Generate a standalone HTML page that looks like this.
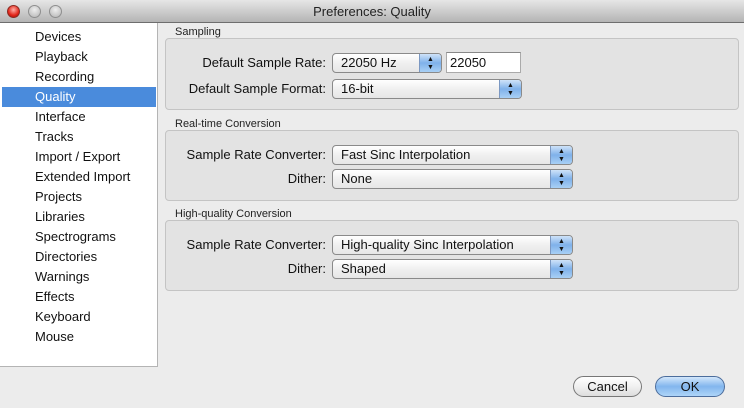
<!DOCTYPE html>
<html><head><meta charset="utf-8"><style>
*{margin:0;padding:0;box-sizing:border-box}
body{width:744px;height:408px;background:#ececec;font-family:"Liberation Sans",sans-serif;font-size:13px;color:#111;position:relative;overflow:hidden}
.title{position:absolute;left:0;top:0;width:744px;height:23px;background:linear-gradient(#e6e6e6,#b4b4b4);border-bottom:1px solid #6e6e6e;text-align:center;line-height:23px;font-size:13px;color:#222}
.tl{position:absolute;top:5px;width:13px;height:13px;border-radius:50%;background:radial-gradient(circle at 50% 35%,#eee,#b3b3b3);border:1px solid #8e8e8e}
.side{position:absolute;left:0;top:23px;width:158px;height:344px;background:#fff;border-right:1px solid #b4b4b4;border-bottom:1px solid #b4b4b4}
.item{position:absolute;left:35px;height:20px;line-height:20px;font-size:13px}
.sel{position:absolute;left:2px;top:64px;width:154px;height:20px;background:#4a8bdc}
.lbl{position:absolute;font-size:11px;color:#222}
.box{position:absolute;left:165px;width:574px;background:#e3e3e3;border:1px solid #c4c4c4;border-radius:4px}
.r{position:absolute;text-align:right;font-size:13px;line-height:20px}
.pop{position:absolute;height:20px;background:linear-gradient(#fff,#f0f0f0 50%,#e6e6e6);border:1px solid #8a8a8a;border-radius:4px;line-height:18px;padding-left:8px;font-size:13px;overflow:hidden}
.pop .a{position:absolute;right:0;top:0;width:22px;height:18px;background:linear-gradient(#cfe3f9,#7fb1ea 50%,#a8d0f5);border-left:1px solid #7b98c2;text-align:center;font-size:7px;line-height:8px;padding-top:2px;color:#111}
.tf{position:absolute;height:21px;background:#fff;border:1px solid #aaa;border-top-color:#888;line-height:19px;padding-left:3px}
.btn{position:absolute;height:21px;border-radius:11px;border:1px solid #777;text-align:center;line-height:19px;font-size:13px}
</style></head><body>
<div class="title">Preferences: Quality</div>
<div class="tl" style="left:7px;background:radial-gradient(circle at 50% 35%,#ffb0a8,#e2261a 60%,#a01008);border-color:#8b2a22"></div>
<div class="tl" style="left:28px"></div>
<div class="tl" style="left:49px"></div>
<div class="side">
<div class="sel"></div>
<div class="item" style="top:4px">Devices</div>
<div class="item" style="top:24px">Playback</div>
<div class="item" style="top:44px">Recording</div>
<div class="item" style="top:64px;color:#fff">Quality</div>
<div class="item" style="top:84px">Interface</div>
<div class="item" style="top:104px">Tracks</div>
<div class="item" style="top:124px">Import / Export</div>
<div class="item" style="top:144px">Extended Import</div>
<div class="item" style="top:164px">Projects</div>
<div class="item" style="top:184px">Libraries</div>
<div class="item" style="top:204px">Spectrograms</div>
<div class="item" style="top:224px">Directories</div>
<div class="item" style="top:244px">Warnings</div>
<div class="item" style="top:264px">Effects</div>
<div class="item" style="top:284px">Keyboard</div>
<div class="item" style="top:304px">Mouse</div>
</div>

<div class="lbl" style="left:175px;top:26px">Sampling</div>
<div class="box" style="top:38px;height:72px"></div>
<div class="r" style="left:160px;width:166px;top:53px">Default Sample Rate:</div>
<div class="pop" style="left:332px;top:53px;width:110px">22050 Hz<div class="a">▲<br>▼</div></div>
<div class="tf" style="left:446px;top:52px;width:75px">22050</div>
<div class="r" style="left:160px;width:166px;top:79px">Default Sample Format:</div>
<div class="pop" style="left:332px;top:79px;width:190px">16-bit<div class="a">▲<br>▼</div></div>

<div class="lbl" style="left:175px;top:118px">Real-time Conversion</div>
<div class="box" style="top:130px;height:71px"></div>
<div class="r" style="left:160px;width:166px;top:145px">Sample Rate Converter:</div>
<div class="pop" style="left:332px;top:145px;width:241px">Fast Sinc Interpolation<div class="a">▲<br>▼</div></div>
<div class="r" style="left:160px;width:166px;top:169px">Dither:</div>
<div class="pop" style="left:332px;top:169px;width:241px">None<div class="a">▲<br>▼</div></div>

<div class="lbl" style="left:175px;top:208px">High-quality Conversion</div>
<div class="box" style="top:220px;height:71px"></div>
<div class="r" style="left:160px;width:166px;top:235px">Sample Rate Converter:</div>
<div class="pop" style="left:332px;top:235px;width:241px">High-quality Sinc Interpolation<div class="a">▲<br>▼</div></div>
<div class="r" style="left:160px;width:166px;top:259px">Dither:</div>
<div class="pop" style="left:332px;top:259px;width:241px">Shaped<div class="a">▲<br>▼</div></div>

<div class="btn" style="left:573px;top:376px;width:69px;background:linear-gradient(#fff,#f0f0f0 50%,#ddd)">Cancel</div>
<div class="btn" style="left:655px;top:376px;width:70px;background:linear-gradient(#d3e7fb,#82b6ee 50%,#aed5f8);border-color:#4c6d9c">OK</div>
</body></html>
